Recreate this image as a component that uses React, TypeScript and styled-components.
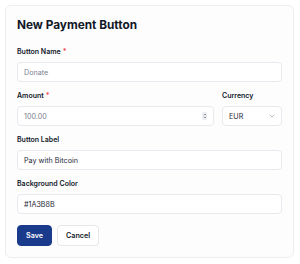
import React from "react";
import styled, { createGlobalStyle } from "styled-components";

const Global = createGlobalStyle`
  html, body { margin: 0; padding: 0; background: #ffffff; }
  body { font-family: Inter, "Noto Sans", sans-serif; -webkit-font-smoothing: antialiased; }
  * { box-sizing: border-box; }
`;

const Card = styled.div`
  margin: 5px;
  width: 289px;
  height: 253px;
  border: 1px solid #eceef2;
  border-radius: 6px;
  background: #fdfdfe;
  padding: 11px;
  display: flex;
  flex-direction: column;
`;

const Title = styled.h1`
  margin: 0 0 14px;
  font-size: 11.8px;
  line-height: 16px;
  font-weight: 700;
  color: #111827;
`;

const Form = styled.div`
  display: flex;
  flex-direction: column;
  gap: 9px;
`;

const Row = styled.div`
  display: flex;
  gap: 8px;
`;

const Field = styled.div<{ $width?: number }>`
  display: flex;
  flex-direction: column;
  gap: 5px;
  flex: ${(p) => (p.$width ? `0 0 ${p.$width}px` : "1 1 auto")};
`;

const Label = styled.label`
  font-size: 7px;
  line-height: 10px;
  font-weight: 600;
  color: #111827;
`;

const Req = styled.span`
  color: #ef4444;
  margin-left: 2px;
`;

const InputBox = styled.div`
  height: 20px;
  border: 1px solid #e7e9ee;
  border-radius: 4px;
  background: #ffffff;
  display: flex;
  align-items: center;
  padding: 0 6px;
  gap: 4px;
`;

const Value = styled.span<{ $placeholder?: boolean }>`
  flex: 1;
  font-size: 7.2px;
  color: ${(p) => (p.$placeholder ? "#7b8190" : "#1f2937")};
`;

const Actions = styled.div`
  display: flex;
  gap: 5px;
  margin-top: 11px;
`;

const Button = styled.button<{ $primary?: boolean }>`
  height: 21px;
  padding: 0 8px;
  border-radius: 4px;
  font-family: Inter, sans-serif;
  font-size: 7.2px;
  font-weight: 600;
  border: 1px solid ${(p) => (p.$primary ? "#1a3b8b" : "#e5e7eb")};
  background: ${(p) => (p.$primary ? "#1a3b8b" : "#ffffff")};
  color: ${(p) => (p.$primary ? "#ffffff" : "#111827")};
`;

const SpinBox = styled.span`
  width: 5px;
  height: 8px;
  border-radius: 1.5px;
  background: #eceef1;
  display: flex;
  align-items: center;
  justify-content: center;
`;

const Spinner = () => (
  <SpinBox>
    <svg width="4" height="6" viewBox="0 0 4 6">
      <path d="M0.8 2.2 L2 1 L3.2 2.2" fill="none" stroke="#6b7280" strokeWidth="0.7" />
      <path d="M0.8 3.8 L2 5 L3.2 3.8" fill="none" stroke="#6b7280" strokeWidth="0.7" />
    </svg>
  </SpinBox>
);

const Chevron = () => (
  <svg width="6" height="4" viewBox="0 0 6 4">
    <path d="M0.8 0.8 L3 3 L5.2 0.8" fill="none" stroke="#9ca3af" strokeWidth="0.7" />
  </svg>
);

export default function App() {
  return (
    <>
      <Global />
      <Card>
        <Title>New Payment Button</Title>
        <Form>
          <Field>
            <Label>
              Button Name<Req>*</Req>
            </Label>
            <InputBox>
              <Value $placeholder>Donate</Value>
            </InputBox>
          </Field>
          <Row>
            <Field>
              <Label>
                Amount<Req>*</Req>
              </Label>
              <InputBox>
                <Value $placeholder>100.00</Value>
                <Spinner />
              </InputBox>
            </Field>
            <Field $width={60}>
              <Label>Currency</Label>
              <InputBox>
                <Value>EUR</Value>
                <Chevron />
              </InputBox>
            </Field>
          </Row>
          <Field>
            <Label>Button Label</Label>
            <InputBox>
              <Value>Pay with Bitcoin</Value>
            </InputBox>
          </Field>
          <Field>
            <Label>Background Color</Label>
            <InputBox>
              <Value>#1A3B8B</Value>
            </InputBox>
          </Field>
        </Form>
        <Actions>
          <Button $primary>Save</Button>
          <Button>Cancel</Button>
        </Actions>
      </Card>
    </>
  );
}
